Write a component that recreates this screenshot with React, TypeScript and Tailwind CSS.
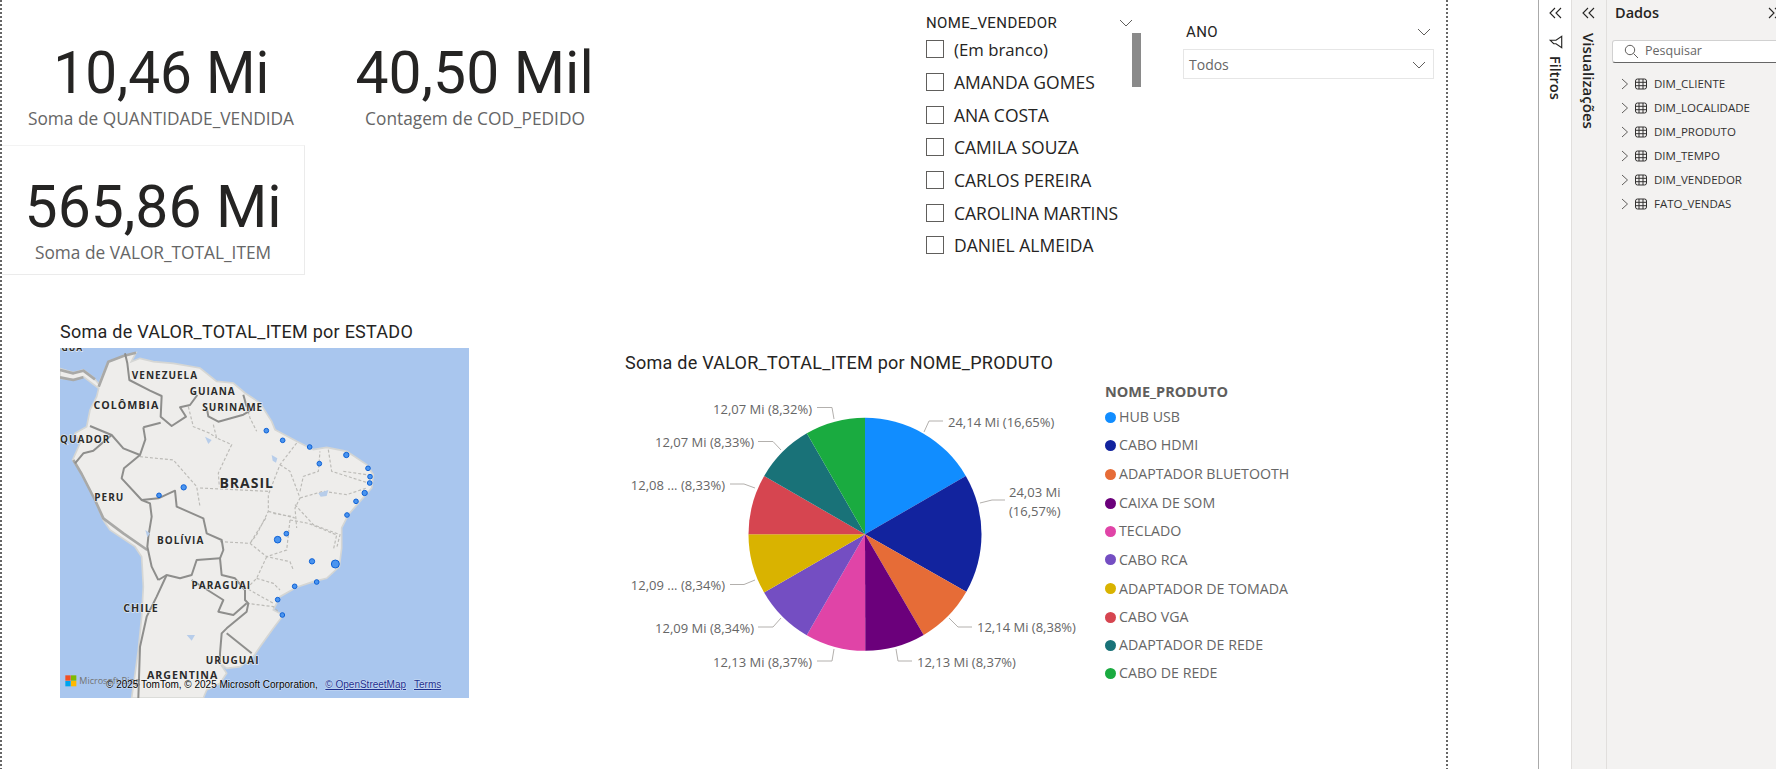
import React from "react";

const SEGOE = "font-['Open_Sans',sans-serif]";
const DIN = "font-['Roboto',sans-serif]";

const slices = [
  { name: "HUB USB", v: 16.65, c: "#118DFF", row: "h-[28px]" },
  { name: "CABO HDMI", v: 16.57, c: "#12239E", row: "h-[28px]" },
  { name: "ADAPTADOR BLUETOOTH", v: 8.38, c: "#E66C37", row: "h-[30px]" },
  { name: "CAIXA DE SOM", v: 8.37, c: "#6B007B", row: "h-[28px]" },
  { name: "TECLADO", v: 8.37, c: "#E044A7", row: "h-[28px]" },
  { name: "CABO RCA", v: 8.34, c: "#744EC2", row: "h-[29px]" },
  { name: "ADAPTADOR DE TOMADA", v: 8.34, c: "#D9B300", row: "h-[29px]" },
  { name: "CABO VGA", v: 8.33, c: "#D64550", row: "h-[28px]" },
  { name: "ADAPTADOR DE REDE", v: 8.33, c: "#197278", row: "h-[28px]" },
  { name: "CABO DE REDE", v: 8.32, c: "#1AAB40", row: "h-[28px]" },
];

function piePaths() {
  const cx = 865, cy = 534.3, r = 116.5;
  const total = slices.reduce((s, x) => s + x.v, 0);
  let a = -Math.PI / 2;
  return slices.map((s) => {
    const b = a + (s.v / total) * Math.PI * 2;
    const d = `M${cx} ${cy}L${cx + r * Math.cos(a)} ${cy + r * Math.sin(a)}A${r} ${r} 0 0 1 ${cx + r * Math.cos(b)} ${cy + r * Math.sin(b)}Z`;
    a = b;
    return { d, c: s.c };
  });
}

const pieLabels: { t: string; x: number; y: number; end?: boolean }[] = [
  { t: "12,07 Mi (8,32%)", x: 812, y: 414, end: true },
  { t: "12,07 Mi (8,33%)", x: 754, y: 447, end: true },
  { t: "12,08 ... (8,33%)", x: 725, y: 490, end: true },
  { t: "12,09 ... (8,34%)", x: 725, y: 590, end: true },
  { t: "12,09 Mi (8,34%)", x: 754, y: 633, end: true },
  { t: "12,13 Mi (8,37%)", x: 812, y: 667, end: true },
  { t: "12,13 Mi (8,37%)", x: 917, y: 667 },
  { t: "12,14 Mi (8,38%)", x: 977, y: 632 },
  { t: "24,14 Mi (16,65%)", x: 948, y: 427 },
  { t: "24,03 Mi", x: 1009, y: 497 },
  { t: "(16,57%)", x: 1009, y: 516 },
];

const leaders = [
  "817,407.5 832,407.5 834,419",
  "758,441.5 773,441.5 781,450",
  "730,484 744,484 755,488",
  "730,584.5 744,584.5 755,580",
  "758,627 773,627 781,618",
  "817,661 832,661 834,649",
  "896,649 898,661 912,661",
  "949,618 958,627 972,627",
  "924,432 929,421 943,421",
  "980,503 992,500 1005,500",
];

function PieChart() {
  return (
    <svg width="485" height="300" viewBox="620 385 485 300" className="shrink-0">
      {piePaths().map((p, i) => (
        <path key={i} d={p.d} fill={p.c} />
      ))}
      {leaders.map((l, i) => (
        <polyline key={i} points={l} fill="none" stroke="#b3b0ad" strokeWidth="1" />
      ))}
      {pieLabels.map((l, i) => (
        <text key={i} x={l.x} y={l.y} textAnchor={l.end ? "end" : "start"} fontSize="13" fill="#666666" fontFamily="'Open Sans',sans-serif">
          {l.t}
        </text>
      ))}
    </svg>
  );
}

const dots: [number, number, number][] = [
  [679, 332, 7], [728, 361, 7], [809, 381, 7], [919, 405, 8], [838, 431, 7], [984, 445, 7], [990, 470, 7],
  [989, 489, 7], [974, 519, 8], [948, 544, 7], [921, 585, 7], [739, 641, 7], [713, 659, 10], [816, 724, 8],
  [886, 732, 12], [830, 786, 7], [764, 799, 7], [713, 839, 7], [727, 885, 7], [431, 502, 8], [357, 526, 7],
];

const solidBorders = [
  "M255 100L262 130L268 180L330 212L365 228L362 290L395 318L438 290L420 262L450 255L472 225",
  "M500 262L505 289L535 305L610 284L645 264",
  "M610 224L620 260",
  "M310 322L362 308",
  "M310 322L316 358L300 405L252 445L245 475L305 540L355 535L405 512L410 560L490 595L500 640L545 660L550 690L540 715L545 765L585 775L615 810L615 840L625 850L620 875L560 925L545 940L540 1000L540 1030",
  "M560 940L635 1000",
  "M150 318L215 345L250 385L300 405",
  "M105 430L130 400L160 392L215 345",
  "M305 540L330 550L335 590L325 650L322 680L335 740L355 780",
  "M540 715L470 720L455 765L420 775L380 765L355 780",
  "M380 765L350 830L320 890L300 980L295 1134",
  "M455 780L550 840L535 875L580 885L620 850",
];

const coastShade = [
  "M100 420L125 462L165 540L190 595L250 640L322 690",
  "M176 200L205 125L250 108L288 98",
  "M60 150L100 160L130 152L165 178",
  "M60 172L100 180L130 172",
];

const dashBorders = [
  "M520 314L530 354L575 374L535 459L538 500",
  "M480 504L685 514",
  "M770 369L720 434L685 524L685 574L650 644L630 670L680 590",
  "M720 434L750 454L780 534L765 564L770 624",
  "M685 574L765 594",
  "M780 514L790 469L835 454L840 394",
  "M865 389L875 454L985 489",
  "M910 454L980 464",
  "M780 534L850 514L920 524L980 504",
  "M765 554L820 614L900 644L890 684",
  "M620 260L630 294L650 334",
  "M540 665L630 670L680 710L750 725L760 750",
  "M680 710L650 775L620 805L700 850",
  "M650 775L700 790L720 810",
  "M750 600L805 610L890 645L880 690",
  "M750 600L740 690L680 710",
  "M700 580L760 590",
  "M445 260L460 320L510 340L530 354",
  "M300 410L400 420L470 500L480 560",
  "M620 850L700 860L715 875",
];

const mapLabels: [string, number, number, number][] = [
  ["GUA", 97, 92, 26], ["VENEZUELA", 375, 178, 30], ["GUIANA", 518, 226, 30], ["SURINAME", 578, 273, 30],
  ["COLÔMBIA", 259, 266, 32], ["PERU", 208, 544, 30], ["BRASIL", 620, 503, 42], ["BOLÍVIA", 422, 672, 30],
  ["PARAGUAI", 544, 808, 30], ["CHILE", 303, 876, 32], ["URUGUAI", 578, 1032, 30], ["ARGENTINA", 428, 1078, 32],
];

function MapView() {
  return (
    <svg width="409" height="350" viewBox="60 84 1227 1050" className="block shrink-0 bg-[#a9c6ee]">
      <defs>
        <filter id="soft" x="-5%" y="-5%" width="110%" height="110%">
          <feGaussianBlur stdDeviation="2.2" />
        </filter>
      </defs>
      <g filter="url(#soft)">
        <path
          d="M60 146L100 158L130 150L160 172L176 192L205 125L250 108L288 98L274 125L300 115L340 125L400 130L480 144L530 184L580 189L615 219L660 249L695 304L705 329L770 364L820 389L860 382L920 394L980 434L1000 464L995 504L960 544L925 584L905 624L905 684L898 740L860 775L820 785L770 802L720 830L700 870L730 885L700 925L660 980L640 1010L600 1040L560 1045L540 1030L560 1060L540 1090L500 1110L490 1134L275 1134L295 990L305 890L310 800L305 710L285 680L210 630L190 600L165 540L125 462L98 420L120 370L105 340L140 320L150 270L170 230L176 205L130 170L100 178L60 175Z"
          fill="#eeedeb"
          stroke="#d5d6d4"
          strokeWidth="5"
        />
        {coastShade.map((d, i) => (
          <path key={i} d={d} fill="none" stroke="#a9a9a7" strokeWidth="8" strokeLinejoin="round" />
        ))}
        {dashBorders.map((d, i) => (
          <path key={i} d={d} fill="none" stroke="#bcbbb7" strokeWidth="3.5" strokeDasharray="9 6" />
        ))}
        {solidBorders.map((d, i) => (
          <path key={i} d={d} fill="none" stroke="#8e8e8c" strokeWidth="6" strokeLinejoin="round" />
        ))}
        <path d="M695 405L712 415L708 428L698 422Z M835 520L865 510L860 528L842 530Z M495 350L515 360L505 372Z M440 945L465 945L455 962Z M316 630L330 640L322 652Z" fill="#b7cdea" />
      </g>
      {mapLabels.map(([t, x, y, s]) => (
        <text key={t} x={x} y={y} textAnchor="middle" fontSize={s} fontWeight="700" letterSpacing="3" fill="#2b2b2b" stroke="#f4f4f2" strokeWidth="3" paintOrder="stroke" fontFamily="'Open Sans',sans-serif">
          {t}
        </text>
      ))}
      <text x="60" y="368" fontSize="30" fontWeight="700" letterSpacing="3" fill="#2b2b2b" stroke="#f4f4f2" strokeWidth="3" paintOrder="stroke" fontFamily="'Open Sans',sans-serif">
        QUADOR
      </text>
      {dots.map(([x, y, r], i) => (
        <circle key={i} cx={x} cy={y} r={r} fill="#4a94ef" stroke="#0f62d6" strokeWidth="3" />
      ))}
      <rect x="76" y="1066" width="16" height="16" fill="#f25022" />
      <rect x="93" y="1066" width="16" height="16" fill="#7fba00" />
      <rect x="76" y="1083" width="16" height="16" fill="#00a4ef" />
      <rect x="93" y="1083" width="16" height="16" fill="#ffb900" />
      <text x="118" y="1092" fontSize="27" fill="#737373" fontFamily="'Open Sans',sans-serif">Microsoft Bing</text>
      <text x="198" y="1104" fontSize="30" fill="#000" stroke="#ffffff" strokeOpacity="0.45" strokeWidth="3" paintOrder="stroke" fontFamily="'Liberation Sans',sans-serif">
        © 2025 TomTom, © 2025 Microsoft Corporation,
      </text>
      <text x="856" y="1104" fontSize="30" fill="#1d2f8f" textDecoration="underline" stroke="#ffffff" strokeOpacity="0.4" strokeWidth="3" paintOrder="stroke" fontFamily="'Liberation Sans',sans-serif">
        © OpenStreetMap
      </text>
      <text x="1122" y="1104" fontSize="30" fill="#1d2f8f" textDecoration="underline" stroke="#ffffff" strokeOpacity="0.4" strokeWidth="3" paintOrder="stroke" fontFamily="'Liberation Sans',sans-serif">
        Terms
      </text>
    </svg>
  );
}

function Chevron({ className = "" }: { className?: string }) {
  return (
    <svg width="14" height="8" viewBox="0 0 14 8" className={className}>
      <path d="M1 1L7 7L13 1" fill="none" stroke="#605e5c" strokeWidth="1" />
    </svg>
  );
}

function DoubleChevron({ right = false }: { right?: boolean }) {
  return (
    <svg width="14" height="12" viewBox="0 0 14 12" className="shrink-0">
      <path d={right ? "M1 1L6 6L1 11M7 1L12 6L7 11" : "M6 1L1 6L6 11M12 1L7 6L12 11"} fill="none" stroke="#252423" strokeWidth="1.1" />
    </svg>
  );
}

function TableIcon() {
  return (
    <svg width="12" height="12" viewBox="0 0 12 12" className="shrink-0">
      <rect x="0.5" y="1" width="11" height="10" rx="2" fill="none" stroke="#323130" strokeWidth="1" />
      <path d="M4 1V11M8 1V11M0.5 4.3H11.5M0.5 7.7H11.5" fill="none" stroke="#323130" strokeWidth="1" />
    </svg>
  );
}

function Dotted() {
  return <div className="w-[2px] h-full shrink-0 bg-[repeating-linear-gradient(to_bottom,#666666_0,#666666_2px,transparent_2px,transparent_4px)]" />;
}

function Kpi({ value, label, squeeze = "scale-x-[0.98]" }: { value: string; label: string; squeeze?: string }) {
  return (
    <div className="flex flex-col items-center">
      <div className={`${DIN} text-[60px] leading-[70px] text-[#252423] ${squeeze} whitespace-nowrap`}>{value}</div>
      <div className={`${SEGOE} text-[17.3px] leading-[22px] text-[#666666] whitespace-nowrap`}>{label}</div>
    </div>
  );
}

const sellers = ["(Em branco)", "AMANDA GOMES", "ANA COSTA", "CAMILA SOUZA", "CARLOS PEREIRA", "CAROLINA MARTINS", "DANIEL ALMEIDA"];
const tables = ["DIM_CLIENTE", "DIM_LOCALIDADE", "DIM_PRODUTO", "DIM_TEMPO", "DIM_VENDEDOR", "FATO_VENDAS"];

export default function App() {
  return (
    <div className="w-[1776px] h-[769px] flex overflow-hidden bg-white">
      <Dotted />
      <main className="w-[1444px] h-full shrink-0 flex flex-col">
        <div className="flex h-[280px] shrink-0">
          <div className="w-[924px] shrink-0 flex flex-col">
            <div className="flex h-[145px] pt-[38px]">
              <div className="w-[318px] shrink-0 flex justify-center"><Kpi value="10,46 Mi" label="Soma de QUANTIDADE_VENDIDA" squeeze="scale-x-[0.945]" /></div>
              <div className="w-[310px] shrink-0 flex justify-center"><Kpi value="40,50 Mil" label="Contagem de COD_PEDIDO" /></div>
            </div>
            <div className="w-[303px] h-[130px] border border-[#ebebeb] border-l-0 border-t-[#f3f3f3] flex justify-center pt-[26px]">
              <Kpi value="565,86 Mi" label="Soma de VALOR_TOTAL_ITEM" />
            </div>
          </div>
          <div className="w-[216px] shrink-0 flex flex-col pt-[13px]">
            <div className="flex items-center justify-between h-[20px] pr-[9px]">
              <span className={`${DIN} text-[15px] text-[#252423] tracking-[0.4px]`}>NOME_VENDEDOR</span>
              <Chevron />
            </div>
            <div className="flex">
              <div className="flex flex-col w-[206px]">
                {sellers.map((s, i) => (
                  <div key={s} className="flex items-center gap-[10px] h-[32.7px]">
                    <span className="w-[18px] h-[18px] border border-[#605e5c] shrink-0" />
                    <span className={`${SEGOE} ${i === 0 ? "text-[16.8px]" : "text-[17.5px]"} text-[#252423] whitespace-nowrap`}>{s}</span>
                  </div>
                ))}
              </div>
              <div className="w-[9px] h-[54px] bg-[#8a8a8a]" />
            </div>
          </div>
          <div className="w-[251px] ml-[41px] shrink-0 flex flex-col pt-[22px]">
            <div className="flex items-center justify-between h-[20px] pl-[3px] pr-[3px]">
              <span className={`${DIN} text-[15px] text-[#252423] tracking-[0.4px]`}>ANO</span>
              <Chevron />
            </div>
            <div className="mt-[7px] h-[30px] border border-[#e6e6e6] flex items-center justify-between pl-[5px] pr-[7px] pt-[1px]">
              <span className={`${SEGOE} text-[14px] text-[#666666]`}>Todos</span>
              <Chevron />
            </div>
          </div>
        </div>
        <div className="flex">
          <div className="ml-[58px] mt-[40px] w-[409px] shrink-0 flex flex-col">
            <div className={`${DIN} text-[18px] h-[24px] leading-[24px] text-[#252423] whitespace-nowrap mb-[4px] tracking-[0.25px]`}>Soma de VALOR_TOTAL_ITEM por ESTADO</div>
            <MapView />
          </div>
          <div className="ml-[156px] mt-[71px] flex flex-col">
            <div className={`${DIN} text-[18px] h-[24px] leading-[24px] text-[#252423] whitespace-nowrap tracking-[0.25px]`}>Soma de VALOR_TOTAL_ITEM por NOME_PRODUTO</div>
            <div className="flex mt-[10px] -ml-[5px]">
              <PieChart />
              <div className="flex flex-col">
                <div className={`${SEGOE} text-[14.5px] font-bold text-[#605e5c] h-[18px] leading-[14px] whitespace-nowrap`}>NOME_PRODUTO</div>
                <div className="flex flex-col">
                  {slices.map((s) => (
                    <div key={s.name} className={`flex items-center gap-[3px] ${s.row}`}>
                      <span className="w-[11px] h-[11px] rounded-full shrink-0" style={{ backgroundColor: s.c }} />
                      <span className={`${SEGOE} text-[14.2px] text-[#666666] whitespace-nowrap`}>{s.name}</span>
                    </div>
                  ))}
                </div>
              </div>
            </div>
          </div>
        </div>
      </main>
      <Dotted />
      <div className="w-[90px] shrink-0" />
      <aside className="w-[33px] shrink-0 border-l border-[#aaaaaa] flex flex-col items-center pt-[7px] pl-[1px]">
        <DoubleChevron />
        <svg width="16" height="16" viewBox="0 0 14 14" className="mt-[15px]">
          <path d="M2 2H12L8.5 7V9L5.5 12V7Z" fill="none" stroke="#252423" strokeWidth="1" transform="rotate(90 7 7)" />
        </svg>
        <span className={`${SEGOE} mt-[6px] text-[14.5px] font-semibold text-[#252423] [writing-mode:vertical-rl]`}>Filtros</span>
      </aside>
      <aside className="w-[35px] shrink-0 bg-[#f3f2f1] border-l border-[#e1dfdd] flex flex-col items-center pt-[7px]">
        <DoubleChevron />
        <span className={`${SEGOE} mt-[14px] text-[15px] font-semibold text-[#252423] [writing-mode:vertical-rl]`}>Visualizações</span>
      </aside>
      <aside className="flex-1 min-w-0 bg-[#f3f2f1] border-l border-[#e1dfdd] flex flex-col overflow-hidden">
        <div className="flex items-center justify-between h-[26px] pl-[8px]">
          <span className={`${SEGOE} text-[14.5px] font-semibold text-[#252423]`}>Dados</span>
          <span className="mr-[-6px]"><DoubleChevron right /></span>
        </div>
        <div className="ml-[5px] mr-[-10px] mt-[14px] h-[23px] bg-white border border-[#d1d1d1] border-b-[#666666] rounded-[3px] flex items-center pl-[11px] gap-[6px]">
          <svg width="15" height="15" viewBox="0 0 15 15" className="shrink-0">
            <circle cx="6" cy="6" r="4.7" fill="none" stroke="#605e5c" strokeWidth="1" />
            <path d="M9.5 9.5L14 14" stroke="#605e5c" strokeWidth="1" />
          </svg>
          <span className={`${SEGOE} text-[12.5px] text-[#666666]`}>Pesquisar</span>
        </div>
        <div className="flex flex-col mt-[9px]">
          {tables.map((t) => (
            <div key={t} className="flex items-center h-[24px] pl-[14px]">
              <svg width="8" height="12" viewBox="0 0 8 12" className="shrink-0">
                <path d="M1 1L6.5 6L1 11" fill="none" stroke="#605e5c" strokeWidth="1" />
              </svg>
              <span className="ml-[6px]"><TableIcon /></span>
              <span className={`${SEGOE} ml-[7px] text-[11.5px] text-[#323130] whitespace-nowrap`}>{t}</span>
            </div>
          ))}
        </div>
      </aside>
    </div>
  );
}
